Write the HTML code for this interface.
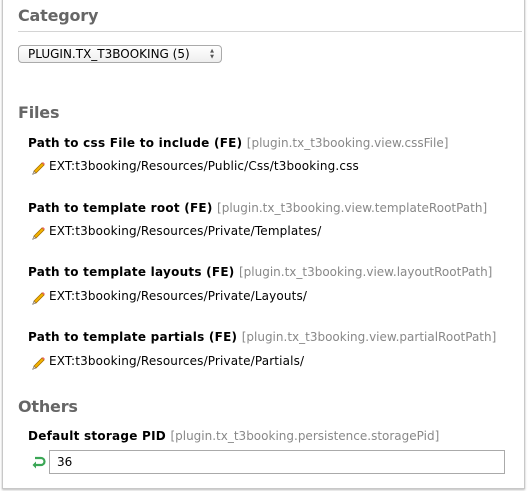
<html><head><style>
body{margin:0;width:528px;height:491px;background:#fff;font-family:Verdana,"DejaVu Sans",sans-serif;position:relative;overflow:hidden}
.frame{position:absolute;left:2px;top:-2px;width:521px;height:489px;border:1px solid #c8c8c8;box-shadow:0 1px 2px #bbb}
.a{position:absolute;white-space:nowrap}
h2{position:absolute;margin:0;left:18px;font-size:16px;font-weight:bold;color:#666;letter-spacing:-0.2px}
.l{font-size:12px;font-weight:bold;color:#000;left:28px;letter-spacing:0.25px}
.l span{font-weight:normal;color:#888;letter-spacing:0}
.v{font-size:12px;color:#000;left:49px;letter-spacing:0.15px}
.pen{position:absolute;left:31px}
</style></head><body>
<div class="frame"></div>
<h2 style="top:6px">Category</h2>
<div class="a" style="left:18px;top:31px;width:504px;height:1px;background:#d4d4d4"></div>
<div class="a" style="left:18px;top:45px;width:202px;height:16px;border:1px solid #aaa;border-radius:4px;background:linear-gradient(#fff,#eee);font-size:12px;line-height:16px;"><span style="margin-left:9px">PLUGIN.TX_T3BOOKING (5)</span><span style="position:absolute;right:7px;top:2px;font-size:5px;line-height:6px;color:#555">&#9650;<br>&#9660;</span></div>
<h2 style="top:103px">Files</h2>
<div class="a l" style="top:136px">Path to css File to include (FE) <span>[plugin.tx_t3booking.view.cssFile]</span></div>
<div class="a v" style="top:159px">EXT:t3booking/Resources/Public/Css/t3booking.css</div>
<div class="a l" style="top:201px">Path to template root (FE) <span>[plugin.tx_t3booking.view.templateRootPath]</span></div>
<div class="a v" style="top:224px">EXT:t3booking/Resources/Private/Templates/</div>
<div class="a l" style="top:265px">Path to template layouts (FE) <span>[plugin.tx_t3booking.view.layoutRootPath]</span></div>
<div class="a v" style="top:289px">EXT:t3booking/Resources/Private/Layouts/</div>
<div class="a l" style="top:330px">Path to template partials (FE) <span>[plugin.tx_t3booking.view.partialRootPath]</span></div>
<div class="a v" style="top:354px">EXT:t3booking/Resources/Private/Partials/</div>
<svg class="pen" style="top:160px" width="16" height="16" viewBox="0 0 16 16"><path d="M3 11 L11 3 L13 5 L5 13 Z" fill="#f5b400" stroke="#a66f00" stroke-width=".8"/><path d="M3 11 L5 13 L1.5 14.5 Z" fill="#e9c9a0" stroke="#555" stroke-width=".5"/><path d="M11 3 L13 5 L14 4 L12 2 Z" fill="#e66"/></svg>
<svg class="pen" style="top:225px" width="16" height="16" viewBox="0 0 16 16"><path d="M3 11 L11 3 L13 5 L5 13 Z" fill="#f5b400" stroke="#a66f00" stroke-width=".8"/><path d="M3 11 L5 13 L1.5 14.5 Z" fill="#e9c9a0" stroke="#555" stroke-width=".5"/><path d="M11 3 L13 5 L14 4 L12 2 Z" fill="#e66"/></svg>
<svg class="pen" style="top:290px" width="16" height="16" viewBox="0 0 16 16"><path d="M3 11 L11 3 L13 5 L5 13 Z" fill="#f5b400" stroke="#a66f00" stroke-width=".8"/><path d="M3 11 L5 13 L1.5 14.5 Z" fill="#e9c9a0" stroke="#555" stroke-width=".5"/><path d="M11 3 L13 5 L14 4 L12 2 Z" fill="#e66"/></svg>
<svg class="pen" style="top:355px" width="16" height="16" viewBox="0 0 16 16"><path d="M3 11 L11 3 L13 5 L5 13 Z" fill="#f5b400" stroke="#a66f00" stroke-width=".8"/><path d="M3 11 L5 13 L1.5 14.5 Z" fill="#e9c9a0" stroke="#555" stroke-width=".5"/><path d="M11 3 L13 5 L14 4 L12 2 Z" fill="#e66"/></svg>
<h2 style="top:397px">Others</h2>
<div class="a l" style="top:429px">Default storage PID <span>[plugin.tx_t3booking.persistence.storagePid]</span></div>
<svg class="a" style="left:31px;top:455px" width="15" height="15" viewBox="0 0 15 15"><path d="M4 3 H10 A3.5 3.5 0 0 1 10 10 H3" fill="none" stroke="#3aa655" stroke-width="2.2"/><path d="M5 6.5 L1.5 10 L5 13.5 Z" fill="#3aa655"/></svg>
<div class="a" style="left:49px;top:450px;width:447px;height:22px;border:1px solid #aaa;font-size:12px;line-height:22px;padding-left:7px">36</div>
</body></html>
